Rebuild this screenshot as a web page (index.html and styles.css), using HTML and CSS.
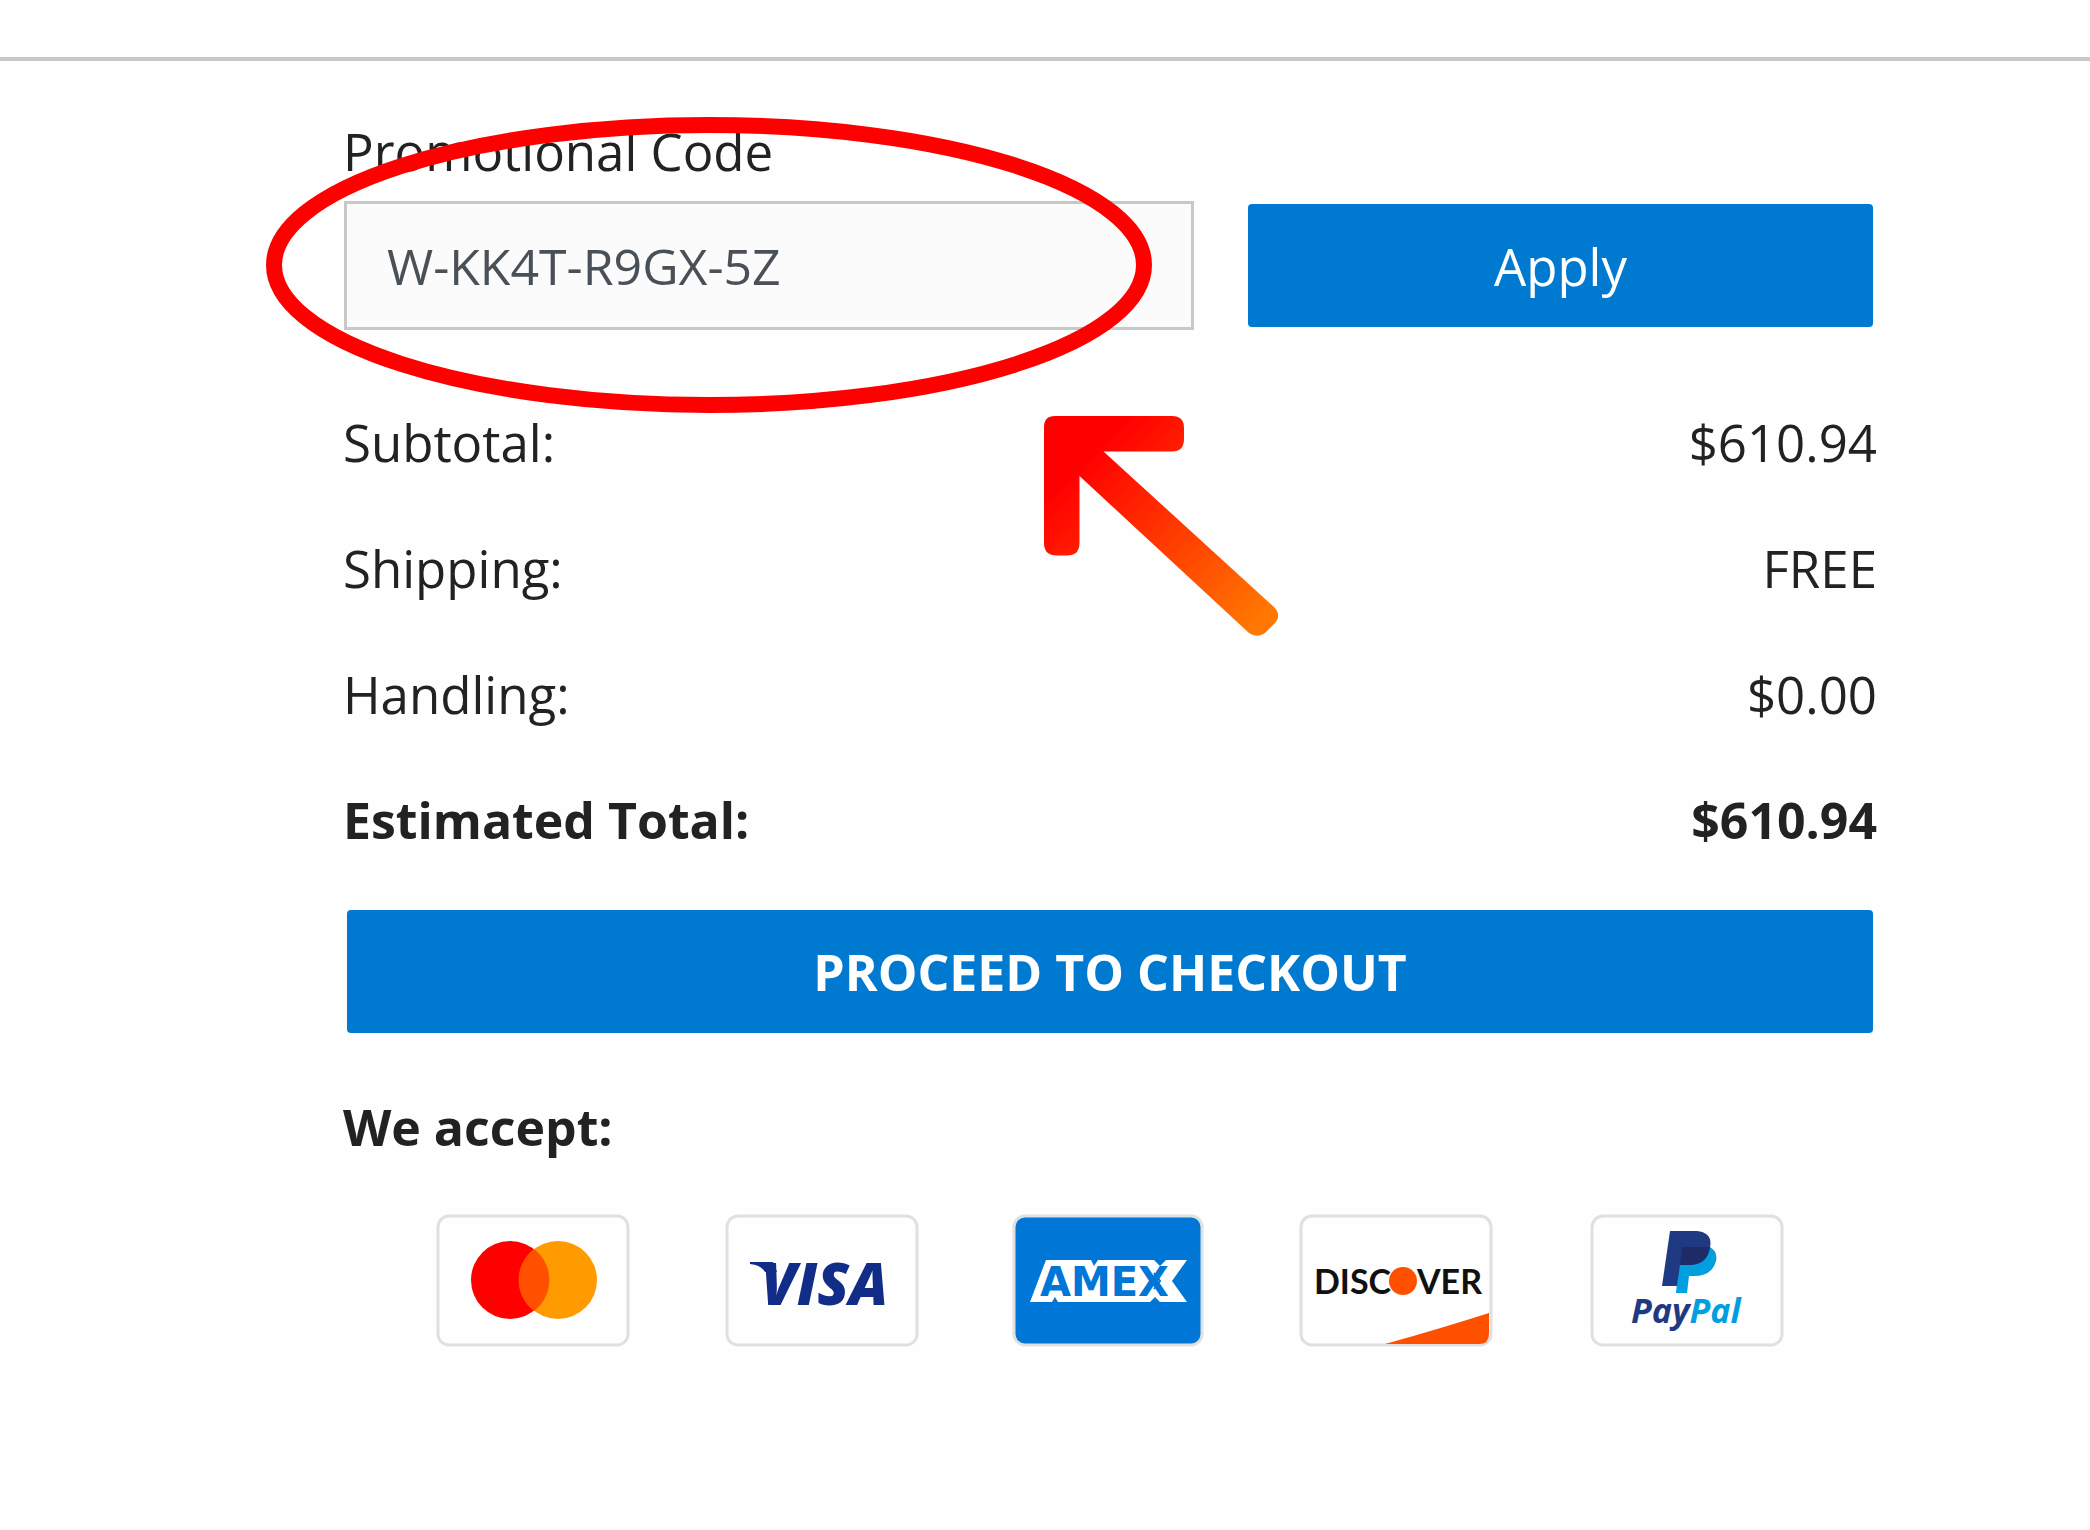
FILE: index.html
```html
<!DOCTYPE html>

<html lang="en">
    <head>
        <meta charset="utf-8">
        <title>Cart</title>
        <link rel="stylesheet" href="styles.css">
    </head>
    <body>

        <hr class="divider">

        <main class="summary">
            <form class="promo" onsubmit="return false">
                <label for="promo_code">Promotional Code</label>
                <div class="promo_row">
                    <input type="text" id="promo_code" class="promo_input" value="W-KK4T-R9GX-5Z" spellcheck="false"/>
                    <button class="btn">Apply</button>
                </div>

                <svg class="circle" viewBox="0 0 887 297" aria-hidden="true">
                    <ellipse cx="443" cy="148" rx="435" ry="140" fill="none" stroke="#ff0000" stroke-width="16"/>
                </svg>
                <svg class="arrow" viewBox="0 0 234 220" aria-hidden="true">
                    <defs>
                        <linearGradient id="heat" gradientUnits="userSpaceOnUse" x1="45" y1="40" x2="215" y2="205">
                            <stop offset="0" stop-color="#ff0000"/>
                            <stop offset="1" stop-color="#ff7800"/>
                        </linearGradient>
                    </defs>
                    <path fill="url(#heat)" d="M11 0H128Q140 0 140 12V23Q140 35.500 128 35.500H59.500L230 191Q238 199 231 207L222 216Q214 223 205 217L35.500 60V127Q35.500 139.500 23 139.500H13Q0 139.500 0 127V11Q0 0 11 0Z"/>
                </svg>
            </form>

            <dl class="totals">
                <div class="line"><dt>Subtotal:</dt><dd>$610.94</dd></div>
                <div class="line"><dt>Shipping:</dt><dd>FREE</dd></div>
                <div class="line"><dt>Handling:</dt><dd>$0.00</dd></div>
                <div class="line total"><dt>Estimated Total:</dt><dd>$610.94</dd></div>
            </dl>

            <button class="btn checkout">PROCEED TO CHECKOUT</button>

            <h2 class="accept">We accept:</h2>

            <div class="cards">
                <svg class="card" viewBox="0 0 194 133" role="img" aria-label="Mastercard">
                    <rect class="frame" x="2" y="2" width="190" height="129" rx="11"/>
                    <circle cx="74" cy="66" r="39" fill="#ff0000"/>
                    <circle cx="122" cy="66" r="39" fill="#ff9a00"/>
                    <path d="M98 35A39 39 0 0 1 98 97A39 39 0 0 1 98 35Z" fill="#ff5000"/>
                </svg>

                <svg class="card" viewBox="0 0 194 133" role="img" aria-label="Visa">
                    <rect class="frame" x="2" y="2" width="190" height="129" rx="11"/>
                    <path d="M25 48H48L52 58H40Q36 51 25 50Z" fill="#112d87"/>
                    <text class="visa" x="36" y="91">VISA</text>
                </svg>

                <svg class="card" viewBox="0 0 194 133" role="img" aria-label="American Express">
                    <rect class="frame amex_frame" x="0" y="2" width="188" height="129" rx="11"/>
                    <path d="M16 88L32 46H77L80 52L84 46H140L146 52L152 46H173L158 67L173 88H146L141 83L136 88H44L41 83L38 88Z" fill="#fff"/>
                    <text class="amex" x="26" y="82">AMEX</text>
                    <path d="M140 59L146 67L140 75" fill="none" stroke="#0076d6" stroke-width="2"/>
                </svg>

                <svg class="card" viewBox="0 0 194 133" role="img" aria-label="Discover">
                    <rect class="frame" x="-1" y="2" width="190" height="129" rx="11"/>
                    <path d="M83 130Q137 115 187 99V120Q187 130 177 130Z" fill="#ff5000"/>
                    <text class="discover" x="12" y="80">DISC</text>
                    <circle cx="101" cy="67" r="14" fill="#ff5000"/>
                    <text class="discover" x="115" y="80">VER</text>
                </svg>

                <svg class="card" viewBox="0 0 194 133" role="img" aria-label="PayPal">
                    <rect class="frame" x="1" y="2" width="190" height="129" rx="11"/>
                    <path d="M90 33H119Q127 38 125 47Q121 62 103 62H98L96 79H85Z" fill="#009fe0"/>
                    <path d="M79 17H106Q122 19 119 33Q117 51 98 51H89L86 72H71Z" fill="#1f3a83"/>
                    <path d="M91 33H119Q116 50 98 51H89Z" fill="#1f2b66"/>
                    <text class="paypal" x="40" y="109">Pay<tspan fill="#009fe0">Pal</tspan></text>
                </svg>
            </div>
        </main>

    </body>
</html>
```
FILE: styles.css
```css
*{
    box-sizing: border-box;
}

body{
    margin: 0;
    background-color: #fefefe;
    color: #222;
    font-family: "Open Sans", sans-serif;
    font-size: 51px;
    line-height: 64px;
}

.divider{
    height: 4px;
    margin: 57px 0 0;
    border: 0;
    background-color: #c8c8c8;
}

.summary{
    padding: 58px 213px 60px 343px;
}

.promo{
    position: relative;
}

.promo label{
    display: block;
    margin-bottom: 18px;
}

.promo_row{
    display: grid;
    grid-template-columns: 850fr 625fr;
    gap: 54px;
    align-items: center;
    padding: 0 4px 0 1px;
}

.promo_input{
    width: 100%;
    height: 129px;
    padding: 0 40px;
    border: 3px solid #c8c8c8;
    background-color: #fbfbfb;
    color: #495057;
    font: inherit;
    font-size: 50px;
}

.btn{
    height: 123px;
    padding: 0;
    border: 0;
    border-radius: 4px;
    background-color: #007ad1;
    color: #fff;
    font: inherit;
}

/* marker drawn over the promo code field */
.circle{
    position: absolute;
    left: -77px;
    top: -2px;
    width: 887px;
    height: 297px;
    pointer-events: none;
}

.arrow{
    position: absolute;
    left: 701px;
    top: 297px;
    width: 234px;
    height: 220px;
    pointer-events: none;
}

.totals{
    display: grid;
    gap: 62px;
    margin: 80px 0 58px;
}

.line{
    display: flex;
    justify-content: space-between;
}

.line dd{
    margin: 0;
}

.total{
    font-size: 50px;
    font-weight: bold;
}

.checkout{
    display: block;
    width: calc(100% - 8px);
    margin-left: 4px;
    font-size: 50px;
    font-weight: bold;
}

.accept{
    margin: 62px 0 55px;
    font-size: 50px;
    font-weight: bold;
}

.cards{
    display: flex;
    justify-content: space-between;
    padding: 0 92px 0 93px;
}

.card{
    width: 194px;
    height: 133px;
    overflow: visible;
}

.frame{
    fill: #fefefe;
    stroke: #e0e0e0;
    stroke-width: 3px;
}

.amex_frame{
    fill: #0076d6;
}

.visa{
    fill: #112d87;
    font: italic 800 58px "Open Sans", sans-serif;
}

.amex{
    fill: #0076d6;
    font: bold 40px "DejaVu Sans", sans-serif;
}

.discover{
    fill: #111;
    font: bold 34px Lato, sans-serif;
}

.paypal{
    fill: #1f3a83;
    font: italic bold 34px "Open Sans", sans-serif;
}
```
